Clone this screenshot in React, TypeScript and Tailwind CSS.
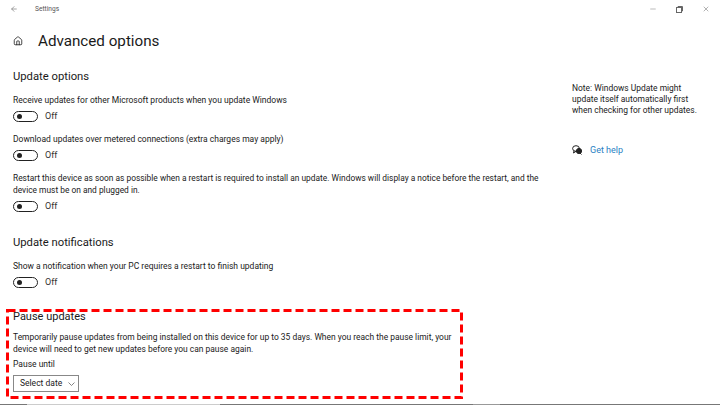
import type { ReactNode } from "react";
import { ArrowLeft, Home, Minus, X } from "lucide-react";

function Toggle() {
  return (
    <div className="mt-[4px] flex h-[12px] items-center">
      <span className="flex h-[11px] w-[25px] items-center rounded-full border-[1.5px] border-[#222] pl-[3px]">
        <span className="h-[5px] w-[5px] rounded-full bg-[#222]" />
      </span>
      <span className="ml-[7px] mt-[1px] text-[9px] text-[#333]">Off</span>
    </div>
  );
}

function Setting({ children, className }: { children: ReactNode; className: string }) {
  return (
    <div className="mb-[11px]">
      <p className={`whitespace-nowrap leading-[12px] text-[#1a1a1a] ${className}`}>{children}</p>
      <Toggle />
    </div>
  );
}

function HelpIcon() {
  return (
    <svg width="11" height="10" viewBox="0 0 11 10" fill="none" stroke="#222" strokeWidth="1">
      <ellipse cx="4" cy="3.5" rx="3.4" ry="2.8" />
      <circle cx="7" cy="6" r="2.6" fill="#222" />
      <path d="M2 6 L1.5 8 L4 6.3" />
      <path d="M8 8 L9.5 9.5" />
    </svg>
  );
}

function RestoreIcon() {
  return (
    <svg width="7" height="7" viewBox="0 0 7 7" fill="none" stroke="#666" strokeWidth="1">
      <rect x="0.5" y="1.5" width="5" height="5" />
      <path d="M2 1.5 V0.5 H6.5 V5 H5.5" />
    </svg>
  );
}

export default function App() {
  return (
    <div
      className="relative flex h-[405px] w-[720px] flex-col overflow-hidden bg-white text-[#1a1a1a]"
      style={{ fontFamily: 'Roboto, "Noto Sans", sans-serif' }}
    >
      <div className="flex h-[18px] shrink-0 items-center">
        <ArrowLeft className="ml-[10px] h-[8px] w-[8px] text-[#777]" />
        <span className="ml-[17px] mt-[1px] text-[6.6px] text-[#555]">Settings</span>
        <div className="ml-auto flex items-center gap-[19px] pr-[10px]">
          <Minus className="h-[8px] w-[8px] text-[#777]" strokeWidth={1.5} />
          <RestoreIcon />
          <X className="h-[8px] w-[8px] text-[#666]" strokeWidth={1.5} />
        </div>
      </div>
      <div className="flex grow">
        <div className="w-[559px] shrink-0 pl-[13px]">
          <div className="mt-[7px] flex h-[32px] items-center">
            <Home className="h-[10px] w-[10px] text-[#222]" />
            <h1 className="ml-[15px] text-[15.2px] leading-[20px] text-[#1a1a1a]">Advanced options</h1>
          </div>
          <h2 className="mt-[12px] mb-[9px] text-[11.25px] leading-[16px]">Update options</h2>
          <Setting className="text-[8.5px]">Receive updates for other Microsoft products when you update Windows</Setting>
          <Setting className="text-[8.5px]">Download updates over metered connections (extra charges may apply)</Setting>
          <Setting className="text-[8.4px]">
            Restart this device as soon as possible when a restart is required to install an update. Windows will display a notice before the restart, and the
            <br />
            device must be on and plugged in.
          </Setting>
          <h2 className="mt-[23px] mb-[9px] text-[11.25px] leading-[16px]">Update notifications</h2>
          <Setting className="text-[8.5px]">Show a notification when your PC requires a restart to finish updating</Setting>
          <h2 className="mt-[21px] mb-[6px] text-[11px] leading-[16px]">Pause updates</h2>
          <p className="whitespace-nowrap text-[8.45px] leading-[12px]">
            Temporarily pause updates from being installed on this device for up to 35 days. When you reach the pause limit, your
            <br />
            device will need to get new updates before you can pause again.
          </p>
          <p className="mt-[3px] text-[8.5px] leading-[12px]">Pause until</p>
          <div className="mt-[5px] flex h-[17px] w-[66px] items-center whitespace-nowrap border-[1.5px] border-[#888] pl-[6px] text-[8.5px]">
            Select date
            <svg className="ml-[6px]" width="7" height="4" viewBox="0 0 7 4" fill="none" stroke="#666" strokeWidth="0.8">
              <path d="M0.5 0.5 L3.5 3.5 L6.5 0.5" />
            </svg>
          </div>
        </div>
        <div className="pl-[13px] pt-[65px] text-[8.45px] leading-[11px]">
          <p className="whitespace-nowrap">
            Note: Windows Update might
            <br />
            update itself automatically first
            <br />
            when checking for other updates.
          </p>
          <div className="mt-[28px] flex h-[12px] items-center">
            <HelpIcon />
            <span className="ml-[7px] text-[9px] text-[#2a7fc4]">Get help</span>
          </div>
        </div>
      </div>
      <div className="flex h-[1px] shrink-0">
        <div className="w-[27px] bg-[#777]" />
        <div className="w-[193px] bg-[#ccc]" />
        <div className="w-[253px] bg-[#777]" />
        <div className="w-[27px] bg-[#999]" />
        <div className="grow bg-[#777]" />
      </div>
      <svg className="pointer-events-none absolute left-0 top-0" width="720" height="405" fill="none">
        <rect x="7.5" y="310.5" width="454" height="87" stroke="#f00" strokeWidth="3" strokeDasharray="8 4" />
      </svg>
    </div>
  );
}
